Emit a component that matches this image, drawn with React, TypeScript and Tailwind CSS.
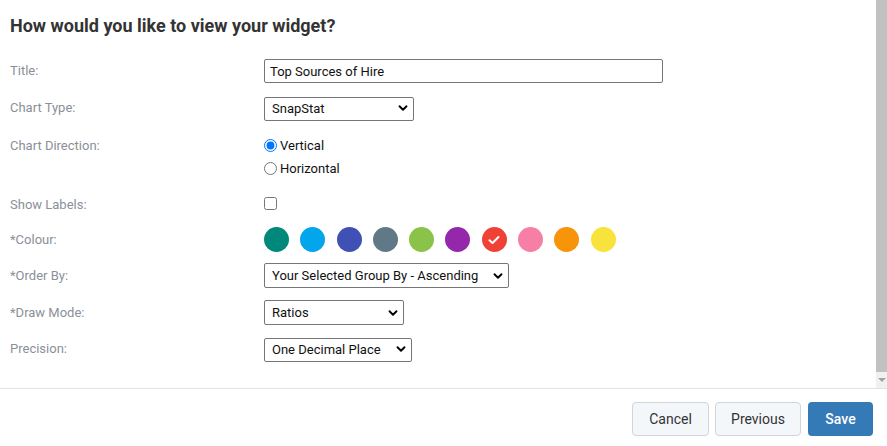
import { ChevronDown } from 'lucide-react'

const COLOURS = [
  { name: 'teal', cls: 'bg-[#00897b]' },
  { name: 'sky', cls: 'bg-[#03a5ec]' },
  { name: 'indigo', cls: 'bg-[#3f51b5]' },
  { name: 'slate', cls: 'bg-[#5f7986]' },
  { name: 'lime', cls: 'bg-[#8bc34a]' },
  { name: 'purple', cls: 'bg-[#9527ab]' },
  { name: 'red', cls: 'bg-[#ef4136]' },
  { name: 'pink', cls: 'bg-[#f77fa6]' },
  { name: 'orange', cls: 'bg-[#f7940a]' },
  { name: 'yellow', cls: 'bg-[#f7e33b]' },
]

type SelectProps = {
  width: string
  value: string
  options: string[]
}

const Select = ({ width, value, options }: SelectProps) => (
  <div className={`relative h-full ${width}`}>
    <select
      defaultValue={value}
      className="h-full w-full appearance-none rounded-[2px] border border-[#767676] bg-white pl-[7px] pr-6 text-[13px] text-[#111]"
    >
      {options.map((o) => (
        <option key={o}>{o}</option>
      ))}
    </select>
    <ChevronDown
      size={14}
      strokeWidth={3.2}
      className="pointer-events-none absolute right-[4px] top-1/2 -translate-y-1/2 text-black"
    />
  </div>
)

const Label = ({ children }: { children: React.ReactNode }) => (
  <div className="w-[254px] shrink-0 text-[13px] text-[#8a9099]">{children}</div>
)

export default function App() {
  return (
    <div className="flex h-[446px] w-[887px] flex-col bg-white font-['Roboto',sans-serif] text-[#333]">
      <div className="flex h-[389px] border-b border-[#e3e3e3]">
        <div className="flex-1 px-[10px] pt-[16px]">
          <h2 className="h-[20px] text-[18px] font-bold leading-[20px] text-[#333]">
            How would you like to view your widget?
          </h2>

          <div className="mt-[23px] flex h-[24px] items-center">
            <Label>Title:</Label>
            <input
              defaultValue="Top Sources of Hire"
              className="h-full w-[399px] rounded-[2px] border border-[#767676] px-[5px] text-[13px] text-[#111]"
            />
          </div>

          <div className="mt-[13px] flex h-[24px] items-center">
            <Label>Chart Type:</Label>
            <Select width="w-[150px]" value="SnapStat" options={['SnapStat', 'Bar', 'Pie']} />
          </div>

          <div className="mt-[14px] flex">
            <div className="flex h-[23px] items-center">
              <Label>Chart Direction:</Label>
            </div>
            <div className="flex flex-col text-[13px] text-[#111]">
              <label className="flex h-[23px] items-center gap-[3px]">
                <input type="radio" name="dir" defaultChecked className="m-0 h-[13px] w-[13px]" />
                Vertical
              </label>
              <label className="flex h-[23px] items-center gap-[3px]">
                <input type="radio" name="dir" className="m-0 h-[13px] w-[13px]" />
                Horizontal
              </label>
            </div>
          </div>

          <div className="mt-[14px] flex h-[22px] items-center">
            <Label>Show Labels:</Label>
            <input type="checkbox" className="m-0 mb-[4px] h-[13px] w-[13px]" />
          </div>

          <div className="mt-[11px] flex h-[25px] items-center">
            <Label>*Colour:</Label>
            <div className="flex gap-[11.3px]">
              {COLOURS.map((c) => (
                <div
                  key={c.name}
                  className={`flex h-[25px] w-[25px] items-center justify-center rounded-full ${c.cls}`}
                >
                  {c.name === 'red' && (
                    <svg width="12" height="10" viewBox="0 0 12 10" fill="none">
                      <path d="M1.5 5.2 4.5 8 10.5 2" stroke="white" strokeWidth="2" strokeLinecap="round" strokeLinejoin="round" />
                    </svg>
                  )}
                </div>
              ))}
            </div>
          </div>

          <div className="mt-[11px] flex h-[25px] items-center">
            <Label>*Order By:</Label>
            <Select
              width="w-[245px]"
              value="Your Selected Group By - Ascending"
              options={['Your Selected Group By - Ascending', 'Your Selected Group By - Descending']}
            />
          </div>

          <div className="mt-[12px] flex h-[25px] items-center">
            <Label>*Draw Mode:</Label>
            <Select width="w-[140px]" value="Ratios" options={['Ratios', 'Totals']} />
          </div>

          <div className="mt-[12px] flex h-[24px] items-center">
            <Label>Precision:</Label>
            <Select
              width="w-[148px]"
              value="One Decimal Place"
              options={['No Decimal Places', 'One Decimal Place', 'Two Decimal Places']}
            />
          </div>
        </div>

        <div className="flex w-[11px] flex-col bg-[#f1f1f1]">
          <div className="h-[372px] bg-[#c1c1c1]" />
          <div className="flex flex-1 items-center justify-center">
            <div className="h-0 w-0 border-x-[4px] border-t-[4px] border-x-transparent border-t-[#a3a3a3]" />
          </div>
        </div>
      </div>

      <div className="flex justify-end pr-[14px] pt-[13px] text-[14px]">
        <button className="h-[34px] w-[77px] rounded-[4px] border border-[#cfd5db] bg-[#f4f7fa] text-[#333]">
          Cancel
        </button>
        <button className="ml-[6px] h-[34px] w-[86px] rounded-[4px] border border-[#cfd5db] bg-[#f4f7fa] text-[#333]">
          Previous
        </button>
        <button className="ml-[7px] h-[34px] w-[65px] rounded-[4px] bg-[#337ab7] font-medium text-white">
          Save
        </button>
      </div>
    </div>
  )
}
